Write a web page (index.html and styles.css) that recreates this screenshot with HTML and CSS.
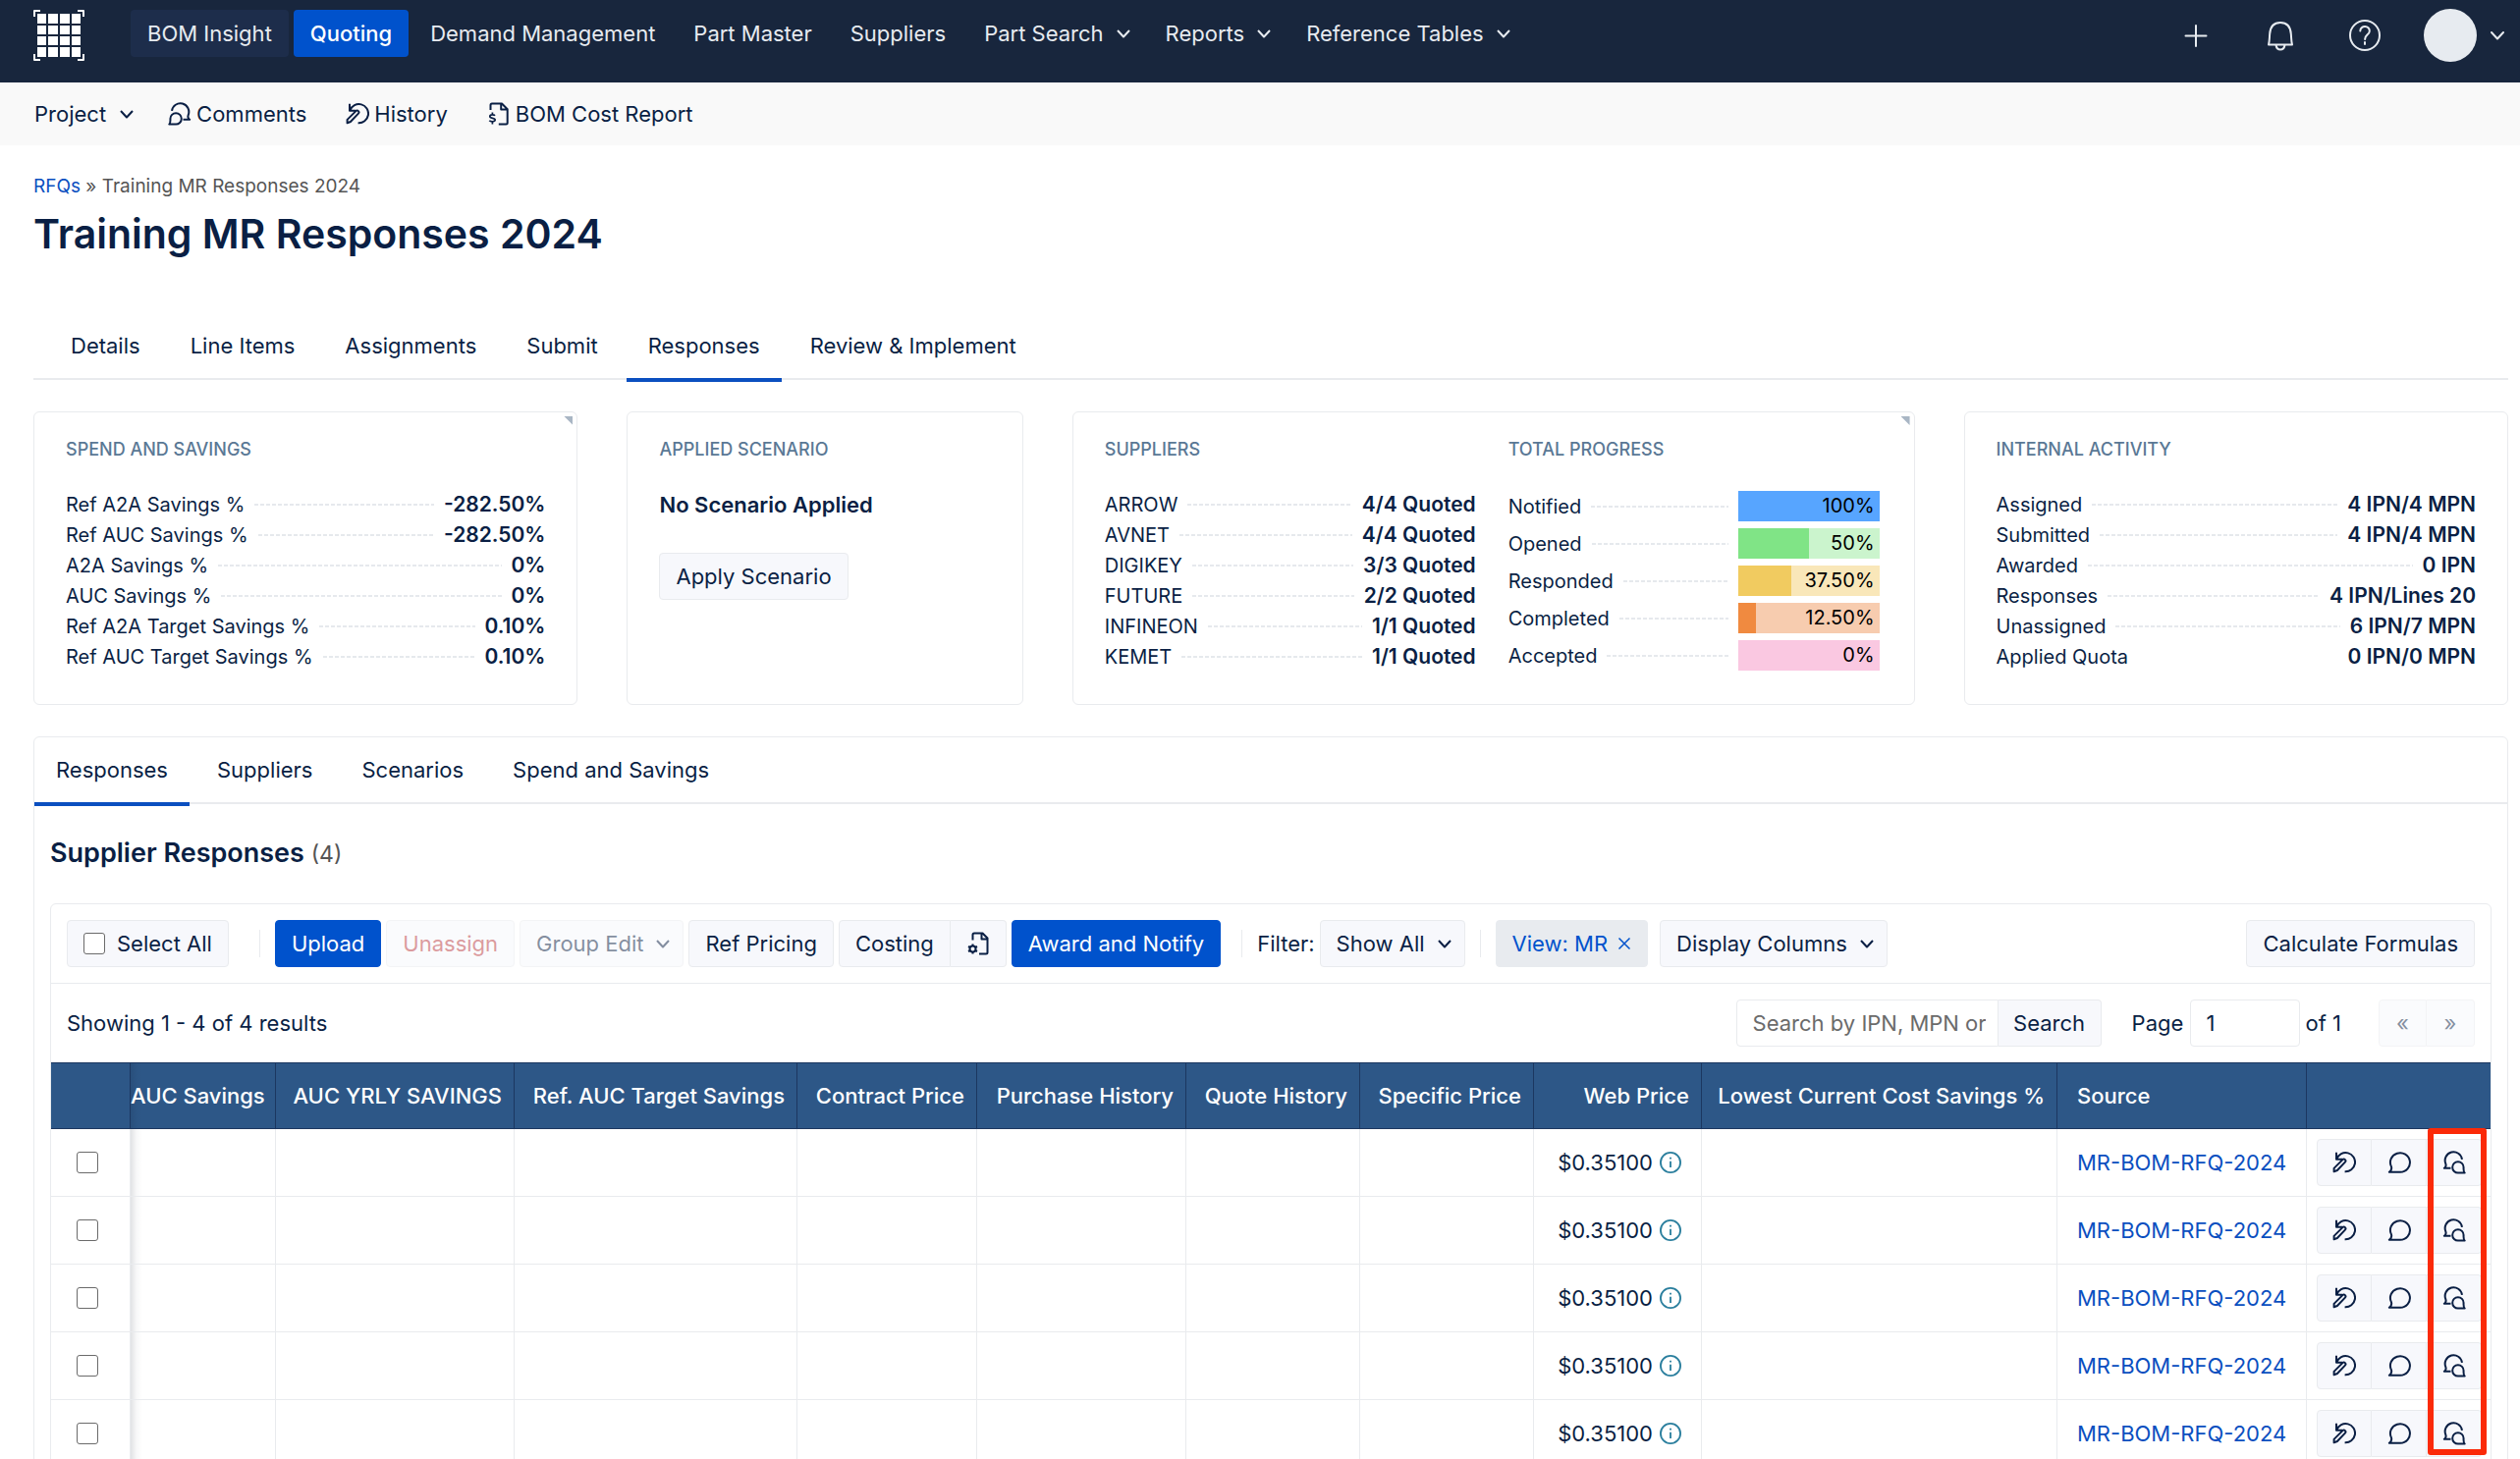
FILE: index.html
```html
<!DOCTYPE html>
<html lang="en">
<head>
<meta charset="utf-8">
<title>Training MR Responses 2024</title>
<link rel="stylesheet" href="styles.css">
</head>
<body>
<svg class="sprite" aria-hidden="true">
  <symbol id="chevron" viewBox="0 0 16 16"><path d="M2 5l6 6.500 6-6.500"/></symbol>
  <symbol id="history" viewBox="0 0 24 24"><path d="M4 1.800v7h6.200M4.400 8.400A9.600 9.600 0 1 1 12.600 21.200M1.600 21.300v-3.400l8.800-8.800a1.700 1.700 0 0 1 2.500 2.500l-8 8.400z"/></symbol>
  <symbol id="bubble" viewBox="0 0 24 24"><path d="M1.800 21.800c2-1.200 2.800-3 2.200-5.400A10 9.800 0 1 1 13 21.800z"/></symbol>
  <symbol id="bubbles" viewBox="0 0 24 24"><path d="M8.500 17.800H1.800c1.700-.9 2.200-2.400 1.500-4.600A8.700 8.700 0 1 1 20 8.800M22.700 22.600H16A5.700 5.700 0 1 1 21.600 16.900c-.2 2.400.1 4.600 1.100 5.700z"/></symbol>
  <symbol id="doc-cost" viewBox="0 0 24 24"><path d="M3.500 8V3A1.500 1.500 0 0 1 5 1.500h10l5.700 5.700V21a1.500 1.500 0 0 1-1.500 1.500h-7.400M14.200 1.500v6h6.500"/><path stroke-width="1.700" d="M8 13.700c-1-1.200-5.200-1.400-5.200.9 0 2.500 5.400 1 5.400 3.500 0 2.200-4.600 2.200-5.900.6M5.400 10.500v2M5.400 20v2.500"/></symbol>
  <symbol id="doc-gear" viewBox="0 0 24 24"><path d="M6.500 8.500V3A1.500 1.500 0 0 1 8 1.500h8.500l5 5V21a1.500 1.500 0 0 1-1.500 1.500h-7M15.500 1.500v6h6"/><circle cx="6.500" cy="17.500" r="3"/><path d="M6.500 12.500v2M6.500 20.500v2M2 15l2 1M9 19l2 1M2 20l2-1M9 16l2-1"/></symbol>
  <symbol id="info" viewBox="0 0 24 24"><circle cx="12" cy="12" r="11"/><path d="M12 10.500v7M12 6.300v1.800"/></symbol>
</svg>

<header class="topbar">
  <a class="logo" href="#" aria-label="Home">
    <svg viewBox="0 0 52 52" width="52" height="52"><path class="frame" d="M1 7V1h6M45 1h6v6M51 45v6h-6M7 51H1v-6"/><path class="cells" d="M4 4h9v10H4zM15 4h10v10H15zM27 4h10v10H27zM39 4h9v10h-9zM4 16h9v9H4zM15 16h10v9H15zM27 16h10v9H27zM39 16h9v9h-9zM4 27h9v9H4zM15 27h10v9H15zM27 27h10v9H27zM39 27h9v9h-9zM4 38h9v10H4zM15 38h10v10H15zM27 38h10v10H27zM39 38h9v10h-9z"/></svg>
  </a>
  <nav class="mainnav">
    <a class="tinted" href="#">BOM Insight</a>
    <a class="current" href="#">Quoting</a>
    <a href="#">Demand Management</a>
    <a href="#">Part Master</a>
    <a href="#">Suppliers</a>
    <a href="#">Part Search <svg class="chev"><use href="#chevron"/></svg></a>
    <a href="#">Reports <svg class="chev"><use href="#chevron"/></svg></a>
    <a href="#">Reference Tables <svg class="chev"><use href="#chevron"/></svg></a>
  </nav>
  <div class="tools">
    <button aria-label="Add"><svg width="34" height="34" viewBox="0 0 34 34"><path d="M17 7v21M6.500 17.500h21"/></svg></button>
    <button aria-label="Notifications"><svg width="34" height="34" viewBox="0 0 34 34"><path d="M5 26.500c1-3.500.8-7 1.200-11C6.800 7.500 11 4 17 4s10.200 3.500 10.800 11.500c.4 4 .2 7.500 1.200 11zM12.500 27c.5 3 2 4.500 4.500 4.500s4-1.500 4.500-4.500"/></svg></button>
    <button aria-label="Help"><svg width="34" height="34" viewBox="0 0 34 34"><circle cx="17" cy="17" r="15"/><path d="M12.300 12.500c.2-6.200 9.800-5.600 9.500.2-.2 3.800-4.700 3.600-4.700 8.300M17 24v2"/></svg></button>
    <button class="account" aria-label="Account"><span class="avatar"></span><svg class="chev"><use href="#chevron"/></svg></button>
  </div>
</header>

<nav class="subbar">
  <a href="#">Project <svg class="chev"><use href="#chevron"/></svg></a>
  <a href="#"><svg class="icon flip"><use href="#bubbles"/></svg>Comments</a>
  <a href="#"><svg class="icon"><use href="#history"/></svg>History</a>
  <a href="#"><svg class="icon"><use href="#doc-cost"/></svg>BOM Cost Report</a>
</nav>

<main>
  <p class="crumbs"><a href="#">RFQs</a> » Training MR Responses 2024</p>
  <h1>Training MR Responses 2024</h1>

  <nav class="tabs page-tabs">
    <a href="#">Details</a>
    <a href="#">Line Items</a>
    <a href="#">Assignments</a>
    <a href="#">Submit</a>
    <a class="active" href="#">Responses</a>
    <a href="#">Review &amp; Implement</a>
  </nav>

  <div class="cards">
    <section class="card corner">
      <h2>Spend and Savings</h2>
      <dl>
        <div><dt>Ref A2A Savings %</dt><dd>-282.50%</dd></div>
        <div><dt>Ref AUC Savings %</dt><dd>-282.50%</dd></div>
        <div><dt>A2A Savings %</dt><dd>0%</dd></div>
        <div><dt>AUC Savings %</dt><dd>0%</dd></div>
        <div><dt>Ref A2A Target Savings %</dt><dd>0.10%</dd></div>
        <div><dt>Ref AUC Target Savings %</dt><dd>0.10%</dd></div>
      </dl>
    </section>
    <section class="card">
      <h2>Applied Scenario</h2>
      <p class="scenario">No Scenario Applied</p>
      <button class="btn">Apply Scenario</button>
    </section>
    <section class="card corner split">
      <div>
        <h2>Suppliers</h2>
        <dl>
          <div><dt>ARROW</dt><dd>4/4 Quoted</dd></div>
          <div><dt>AVNET</dt><dd>4/4 Quoted</dd></div>
          <div><dt>DIGIKEY</dt><dd>3/3 Quoted</dd></div>
          <div><dt>FUTURE</dt><dd>2/2 Quoted</dd></div>
          <div><dt>INFINEON</dt><dd>1/1 Quoted</dd></div>
          <div><dt>KEMET</dt><dd>1/1 Quoted</dd></div>
        </dl>
      </div>
      <div>
        <h2>Total Progress</h2>
        <dl class="progress">
          <div><dt>Notified</dt><dd class="blue"><i style="width:100%"></i><span>100%</span></dd></div>
          <div><dt>Opened</dt><dd class="green"><i style="width:50%"></i><span>50%</span></dd></div>
          <div><dt>Responded</dt><dd class="yellow"><i style="width:37.5%"></i><span>37.50%</span></dd></div>
          <div><dt>Completed</dt><dd class="orange"><i style="width:12.5%"></i><span>12.50%</span></dd></div>
          <div><dt>Accepted</dt><dd class="pink"><i style="width:0%"></i><span>0%</span></dd></div>
        </dl>
      </div>
    </section>
    <section class="card">
      <h2>Internal Activity</h2>
      <dl>
        <div><dt>Assigned</dt><dd>4 IPN/4 MPN</dd></div>
        <div><dt>Submitted</dt><dd>4 IPN/4 MPN</dd></div>
        <div><dt>Awarded</dt><dd>0 IPN</dd></div>
        <div><dt>Responses</dt><dd>4 IPN/Lines 20</dd></div>
        <div><dt>Unassigned</dt><dd>6 IPN/7 MPN</dd></div>
        <div class="plain"><dt>Applied Quota</dt><dd>0 IPN/0 MPN</dd></div>
      </dl>
    </section>
  </div>

  <section class="panel">
    <nav class="tabs">
      <a class="active" href="#">Responses</a>
      <a href="#">Suppliers</a>
      <a href="#">Scenarios</a>
      <a href="#">Spend and Savings</a>
    </nav>
    <h2 class="panel-title">Supplier Responses <small>(4)</small></h2>

    <div class="grid-box">
      <div class="toolbar">
        <label class="btn select-all"><input type="checkbox"> Select All</label>
        <span class="sep lead"></span>
        <button class="btn primary">Upload</button>
        <button class="btn danger" disabled>Unassign</button>
        <button class="btn" disabled>Group Edit <svg class="chev"><use href="#chevron"/></svg></button>
        <button class="btn">Ref Pricing</button>
        <span class="group"><button class="btn">Costing</button><button class="btn" aria-label="Costing settings"><svg class="icon"><use href="#doc-gear"/></svg></button></span>
        <button class="btn primary">Award and Notify</button>
        <span class="sep"></span>
        <label for="filter">Filter:</label>
        <select class="btn" id="filter"><option>Show All</option></select>
        <span class="sep tight"></span>
        <button class="btn view">View: MR <svg class="cross" viewBox="0 0 14 14"><path d="M1.500 1.500l11 11M12.500 1.500l-11 11"/></svg></button>
        <button class="btn columns">Display Columns <svg class="chev"><use href="#chevron"/></svg></button>
        <button class="btn calc">Calculate Formulas</button>
      </div>
      <div class="pager">
        <span class="count">Showing 1 - 4 of 4 results</span>
        <span class="group search"><input type="text" placeholder="Search by IPN, MPN or Manufacturer" aria-label="Search"><button class="btn">Search</button></span>
        <label class="page">Page <input type="text" value="1"></label>
        <span>of 1</span>
        <span class="group steps"><button class="btn" disabled>«</button><button class="btn" disabled>»</button></span>
      </div>
      <div class="table-wrap">
        <table>
          <colgroup><col class="c0"><col class="c1"><col class="c2"><col class="c3"><col class="c4"><col class="c5"><col class="c6"><col class="c6"><col class="c8"><col><col class="c10"><col class="c11"></colgroup>
          <thead>
            <tr><th></th><th class="cut">AUC Savings</th><th>AUC YRLY SAVINGS</th><th>Ref. AUC Target Savings</th><th>Contract Price</th><th>Purchase History</th><th>Quote History</th><th>Specific Price</th><th>Web Price</th><th>Lowest Current Cost Savings %</th><th class="left">Source</th><th></th></tr>
          </thead>
          <tbody>
            <tr><td class="pick"><input type="checkbox" aria-label="Select row 1"></td><td class="shade"></td><td></td><td></td><td></td><td></td><td></td><td></td><td class="price"><span>$0.35100 <svg><use href="#info"/></svg></span></td><td></td><td class="left"><a href="#">MR-BOM-RFQ-2024</a></td><td class="acts"><span class="group"><button class="btn" aria-label="History"><svg class="icon"><use href="#history"/></svg></button><button class="btn" aria-label="Comment"><svg class="icon"><use href="#bubble"/></svg></button><button class="btn" aria-label="Discussion"><svg class="icon"><use href="#bubbles"/></svg></button></span></td></tr>
            <tr><td class="pick"><input type="checkbox" aria-label="Select row 2"></td><td class="shade"></td><td></td><td></td><td></td><td></td><td></td><td></td><td class="price"><span>$0.35100 <svg><use href="#info"/></svg></span></td><td></td><td class="left"><a href="#">MR-BOM-RFQ-2024</a></td><td class="acts"><span class="group"><button class="btn" aria-label="History"><svg class="icon"><use href="#history"/></svg></button><button class="btn" aria-label="Comment"><svg class="icon"><use href="#bubble"/></svg></button><button class="btn" aria-label="Discussion"><svg class="icon"><use href="#bubbles"/></svg></button></span></td></tr>
            <tr><td class="pick"><input type="checkbox" aria-label="Select row 3"></td><td class="shade"></td><td></td><td></td><td></td><td></td><td></td><td></td><td class="price"><span>$0.35100 <svg><use href="#info"/></svg></span></td><td></td><td class="left"><a href="#">MR-BOM-RFQ-2024</a></td><td class="acts"><span class="group"><button class="btn" aria-label="History"><svg class="icon"><use href="#history"/></svg></button><button class="btn" aria-label="Comment"><svg class="icon"><use href="#bubble"/></svg></button><button class="btn" aria-label="Discussion"><svg class="icon"><use href="#bubbles"/></svg></button></span></td></tr>
            <tr><td class="pick"><input type="checkbox" aria-label="Select row 4"></td><td class="shade"></td><td></td><td></td><td></td><td></td><td></td><td></td><td class="price"><span>$0.35100 <svg><use href="#info"/></svg></span></td><td></td><td class="left"><a href="#">MR-BOM-RFQ-2024</a></td><td class="acts"><span class="group"><button class="btn" aria-label="History"><svg class="icon"><use href="#history"/></svg></button><button class="btn" aria-label="Comment"><svg class="icon"><use href="#bubble"/></svg></button><button class="btn" aria-label="Discussion"><svg class="icon"><use href="#bubbles"/></svg></button></span></td></tr>
            <tr><td class="pick"><input type="checkbox" aria-label="Select row 5"></td><td class="shade"></td><td></td><td></td><td></td><td></td><td></td><td></td><td class="price"><span>$0.35100 <svg><use href="#info"/></svg></span></td><td></td><td class="left"><a href="#">MR-BOM-RFQ-2024</a></td><td class="acts"><span class="group"><button class="btn" aria-label="History"><svg class="icon"><use href="#history"/></svg></button><button class="btn" aria-label="Comment"><svg class="icon"><use href="#bubble"/></svg></button><button class="btn" aria-label="Discussion"><svg class="icon"><use href="#bubbles"/></svg></button></span></td></tr>
          </tbody>
        </table>
        <div class="marker"></div>
      </div>
    </div>
  </section>
</main>
</body>
</html>
```
FILE: styles.css
```css
:root {
  --ink: #0a1f44;
  --blue: #0052cc;
  --link: #0b4fc0;
  --line: #e9ebee;
  --soft: #f7f8fc;
}

* { box-sizing: border-box; }

html { scrollbar-width: none; }

body {
  margin: 0;
  background: #fff;
  color: var(--ink);
  font: 400 22px/28px Inter, "Liberation Sans", sans-serif;
}

a { color: inherit; text-decoration: none; }
button, input, select { font: inherit; color: inherit; }
h1, h2, p, dl, dd { margin: 0; }
svg { fill: none; stroke: currentColor; stroke-width: 2; flex: none; stroke-linejoin: round; }
.sprite { display: none; }
.icon { width: 24px; height: 24px; }
.flip { transform: scaleX(-1); }
.chev { width: 16px; height: 16px; stroke-width: 2; }

/* top bar */
.topbar {
  display: flex;
  align-items: flex-start;
  height: 84px;
  padding: 10px 15px 0 34px;
  background: #18263d;
  color: #e7ebf0;
}
.logo { display: flex; color: #fff; }
.logo .cells { fill: #fff; stroke: none; }
.mainnav { display: flex; gap: 5px; margin-left: 47px; }
.mainnav a {
  display: flex;
  align-items: center;
  gap: 12px;
  height: 48px;
  padding: 0 17px;
  border-radius: 4px;
  white-space: nowrap;
}
.mainnav .chev { margin-right: -4px; }
.mainnav .tinted { background: #1d2d4b; }
.mainnav .current { background: var(--blue); color: #fff; font-weight: 500; }
.tools { display: flex; align-items: center; gap: 52px; margin-left: auto; height: 52px; }
.tools button { display: flex; align-items: center; padding: 0; border: 0; background: none; }
.tools .account { gap: 13px; margin-left: -9px; }
.tools svg { stroke-width: 2; stroke-linecap: round; }
.avatar { width: 54px; height: 54px; border-radius: 50%; background: #e7ebf0; }

/* secondary bar */
.subbar {
  display: flex;
  align-items: center;
  gap: 40px;
  height: 64px;
  padding: 0 35px;
  background: #f9f9f9;
}
.subbar a { display: flex; align-items: center; gap: 5px; }
.subbar a:first-child { gap: 13px; margin-right: -6px; }

main { padding: 28px 12px 0 34px; }
.crumbs { color: #555; font-size: 19px; }
.crumbs a { color: var(--link); }
h1 { margin-top: 8px; font-size: 41px; line-height: 52px; font-weight: 600; }

/* tabs */
.tabs { display: flex; gap: 6px; border-bottom: 2px solid var(--line); }
.tabs a {
  position: relative;
  padding: 19px 22px;
}
.tabs .active::after {
  content: "";
  position: absolute;
  left: 0;
  right: 0;
  bottom: -4px;
  height: 4px;
  background: var(--link);
}
.page-tabs { gap: 7px; margin-top: 55px; padding-left: 16px; }

/* summary cards */
.cards {
  display: grid;
  grid-template-columns: 554fr 403fr 857fr 554fr;
  gap: 50px;
  margin-top: 32px;
}
.card {
  position: relative;
  padding: 26px 32px 33px;
  border: 1px solid var(--line);
  border-radius: 6px;
}
.corner::after {
  content: "";
  position: absolute;
  top: 4px;
  right: 4px;
  width: 9px;
  height: 9px;
  background: #a9b6c4;
  clip-path: polygon(0 0, 100% 0, 100% 100%);
}
.card h2 {
  margin-bottom: 28px;
  color: #5a7895;
  font-size: 18px;
  line-height: 24px;
  font-weight: 500;
  text-transform: uppercase;
}
.card dl > div { display: flex; align-items: center; height: 31px; font-size: 21px; line-height: 31px; white-space: nowrap; }
.card dt { display: contents; font-size: 20px; }
.card dt::after {
  content: "";
  flex: 1;
  height: 2px;
  margin: 0 10px 0 10px;
  background: repeating-linear-gradient(90deg, #e6e9ed 0 4px, transparent 4px 6px);
}
.card .plain dt::after { background: none; }
.card dd { font-weight: 600; }
.split { display: grid; grid-template-columns: 1fr 1fr; gap: 33px; padding-right: 35px; }
.scenario { margin: 30px 0 35px; font-weight: 600; }

.card .progress { display: grid; gap: 7px; padding-top: 2px; }
.progress dd {
  position: relative;
  width: 144px;
  padding-right: 5px;
  color: #000;
  font-size: 20px;
  font-weight: 400;
  text-align: right;
}
.progress i { position: absolute; left: 0; top: 0; bottom: 0; }
.progress span { position: relative; }
.blue i { background: #57a5ff; }
.green { background: #cbf4cd; }
.green i { background: #80e486; }
.yellow { background: #f9e7b9; }
.yellow i { background: #f1cb60; }
.orange { background: #f7ccaf; }
.orange i { background: #f08a40; }
.pink { background: #fac8e1; }

/* lower panel */
.panel { margin-top: 32px; border: 1px solid var(--line); border-radius: 6px 6px 0 0; }
.panel-title { margin: 30px 16px 30px; font-size: 27px; line-height: 40px; font-weight: 600; }
.panel-title small { color: #555; font-size: 23px; font-weight: 400; }
.grid-box { margin: 0 16px; border: 1px solid var(--line); border-radius: 6px 6px 0 0; }

.btn {
  display: inline-flex;
  align-items: center;
  justify-content: center;
  gap: 12px;
  height: 48px;
  padding: 0 16px;
  border: 1px solid var(--line);
  border-radius: 4px;
  background: var(--soft);
  white-space: nowrap;
}
.btn .chev { margin-right: -4px; }
.btn:disabled { opacity: .5; color: var(--ink); }
.btn.danger:disabled { color: #b9393f; }
.btn.primary { border-color: var(--blue); background: var(--blue); color: #fff; }
.btn.view { gap: 10px; margin-right: 7px; border-color: #e8ebef; background: #e8ebef; color: var(--blue); }
.cross { width: 14px; height: 14px; stroke-width: 1.500; }
select.btn {
  appearance: none;
  padding-right: 40px;
  background: var(--soft) url("data:image/svg+xml,%3Csvg xmlns='http://www.w3.org/2000/svg' viewBox='0 0 16 16' fill='none' stroke='%230a1f44' stroke-width='2' stroke-linejoin='round'%3E%3Cpath d='M2 5l6 6.500 6-6.500'/%3E%3C/svg%3E") no-repeat right 12px center / 16px;
}
input[type="checkbox"] {
  appearance: none;
  width: 22px;
  height: 22px;
  margin: 0;
  border: 1px solid #6b6b6b;
  border-radius: 3px;
  background: #fff;
}
.group { display: inline-flex; }
.group > * { border-radius: 0; }
.group > :first-child { border-radius: 4px 0 0 4px; }
.group > :last-child { border-radius: 0 4px 4px 0; }
.group > * + * { border-left: 0; }

.toolbar {
  display: flex;
  align-items: center;
  gap: 5px;
  padding: 16px;
  border-bottom: 1px solid var(--line);
}
.sep { width: 1px; height: 28px; margin: 0 10px 0 16px; background: var(--line); }
.sep.lead { margin-left: 26px; }
.sep.tight { margin-left: 10px; }
.calc { margin-left: auto; }

.pager { display: flex; align-items: center; padding: 16px; }
.search { margin-left: auto; }
.search .btn { width: 105px; }
.pager input { height: 48px; padding: 0 12px 0 16px; border: 1px solid var(--line); background: #fff; }
.pager .search input { width: 267px; }
.pager input::placeholder { color: #6b6b6b; opacity: 1; }
.page { margin: 0 6px 0 31px; }
.page input { width: 112px; border-radius: 4px; }
.steps { margin-left: 38px; }
.steps .btn { width: 49px; }

/* responses table */
.table-wrap { position: relative; }
table { width: 100%; table-layout: fixed; border-collapse: separate; border-spacing: 0; }
.c0 { width: 81px; }
.c1 { width: 148px; }
.c2 { width: 243px; }
.c3 { width: 288px; }
.c4 { width: 183px; }
.c5 { width: 213px; }
.c6 { width: 177px; }
.c8 { width: 171px; }
.c10 { width: 254px; }
.c11 { width: 187px; }
th {
  height: 68px;
  padding: 0 12px 0 0;
  border: solid #1c3760;
  border-width: 1px 1px 1px 0;
  background: #2d5787;
  color: #fff;
  font-weight: 500;
  text-align: right;
  white-space: nowrap;
}
th.left, td.left { padding-left: 20px; text-align: left; }
th.cut, td.shade { background-image: linear-gradient(90deg, rgba(10, 20, 40, .12), rgba(10, 20, 40, .03) 6px, transparent 12px); }
td { height: 69px; padding: 0; border: solid var(--line); border-width: 0 1px 1px 0; }
th:last-child, td:last-child { border-right: 0; }
td a { color: var(--link); }
.pick { padding-left: 26px; }
.pick input { display: block; }
.price span { display: flex; align-items: center; justify-content: flex-end; gap: 7px; padding-right: 20px; }
.price svg { width: 22px; height: 22px; color: #2b7f9e; }
.acts { padding-left: 10px; }
.acts .group { display: flex; }
.acts .btn { width: 56px; padding: 0; }
.marker {
  position: absolute;
  top: 67px;
  right: 4px;
  width: 60px;
  height: 333px;
  border: 6px solid #fb2a08;
  border-radius: 3px;
}
```
